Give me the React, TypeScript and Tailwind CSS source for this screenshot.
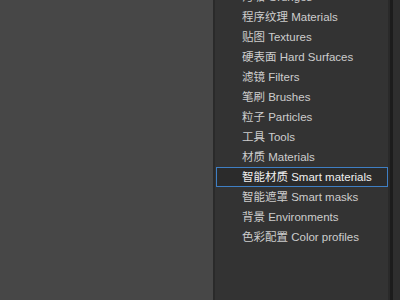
import React from "react";

const items = [
  "污垢 Grunges",
  "程序纹理 Materials",
  "贴图 Textures",
  "硬表面 Hard Surfaces",
  "滤镜 Filters",
  "笔刷 Brushes",
  "粒子 Particles",
  "工具 Tools",
  "材质 Materials",
  "智能材质 Smart materials",
  "智能遮罩 Smart masks",
  "背景 Environments",
  "色彩配置 Color profiles",
];

export default function App() {
  return (
    <div
      className="flex h-[300px] w-[400px] overflow-hidden bg-[#474747]"
      style={{ fontFamily: '"Liberation Sans", "Noto Sans CJK SC", sans-serif' }}
    >
      <div className="w-[213px] shrink-0" />
      <div className="w-[2px] shrink-0 bg-[#2a2a2a]" />
      <div className="flex w-[173px] shrink-0 flex-col bg-[#333333]">
        <div className="mt-[-13px] flex flex-col">
          {items.map((t, i) => {
            const sel = i === 9;
            return (
              <div
                key={i}
                className={
                  "flex h-[20px] items-center pt-[2px] text-[11.5px] leading-none " +
                  (sel
                    ? "ml-[1px] border border-[#3f7fc4] bg-[#2b2b2b] pl-[25px] text-[#f0f0f0]"
                    : "pl-[27px] text-[#cdcdcd]")
                }
              >
                {t}
              </div>
            );
          })}
        </div>
      </div>
      <div className="w-[2px] shrink-0 bg-[#2a2a2a]" />
      <div className="w-[3px] shrink-0 bg-[#1c1c1c]" />
      <div className="flex-1 bg-[#2e2e2e]" />
    </div>
  );
}
